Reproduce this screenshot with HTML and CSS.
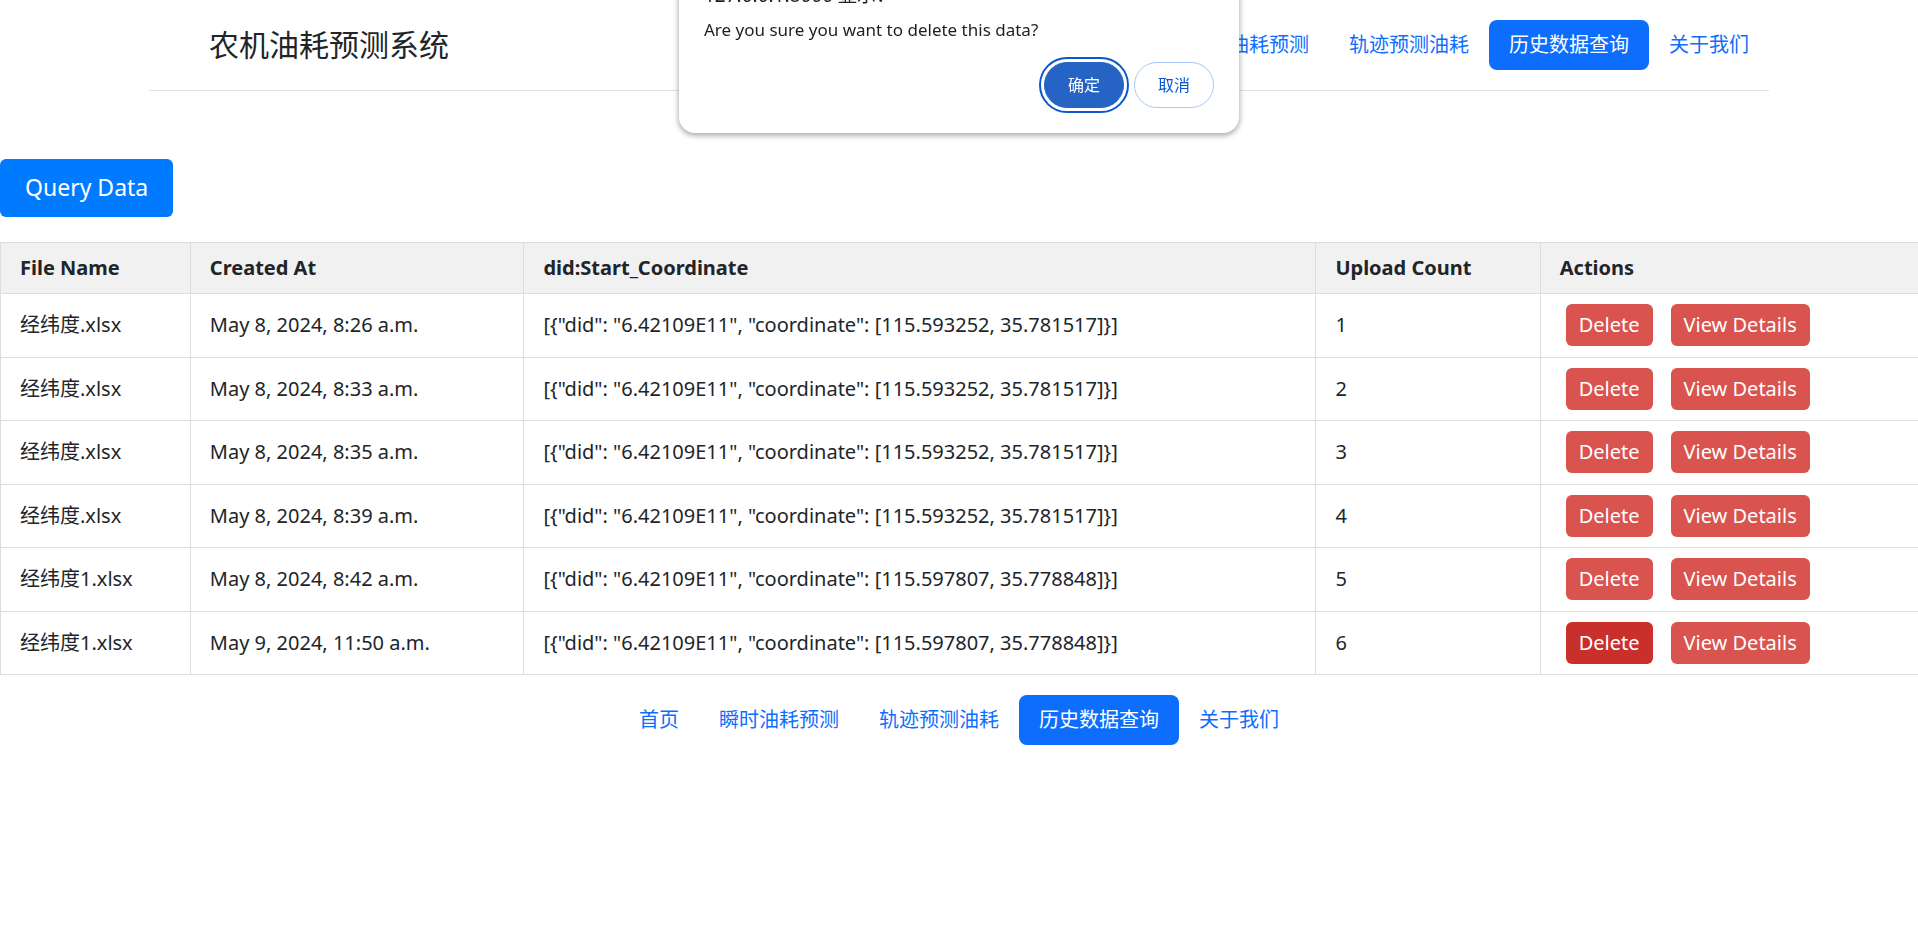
FILE: index.html
```html
<!DOCTYPE html>
<html lang="zh-CN">
<head>
<meta charset="utf-8">
<title>农机油耗预测系统</title>
<meta name="viewport" content="width=device-width, initial-scale=1">
<link rel="stylesheet" href="styles.css">
</head>
<body>
<header class="site-header">
  <h1 class="brand">农机油耗预测系统</h1>
  <nav class="nav" aria-label="主导航">
    <a class="nav-link" href="#home">首页</a>
    <a class="nav-link" href="#instant">瞬时油耗预测</a>
    <a class="nav-link" href="#track">轨迹预测油耗</a>
    <a class="nav-link active" href="#history" aria-current="page">历史数据查询</a>
    <a class="nav-link" href="#about">关于我们</a>
  </nav>
</header>

<main class="content">
  <button class="query-button" type="button">Query Data</button>
  <table class="data-table">
    <colgroup>
      <col class="col-file"><col class="col-created"><col class="col-coordinate"><col class="col-count"><col>
    </colgroup>
    <thead>
      <tr><th>File Name</th><th>Created At</th><th>did:Start_Coordinate</th><th>Upload Count</th><th>Actions</th></tr>
    </thead>
    <tbody>
      <tr><td>经纬度.xlsx</td><td>May 8, 2024, 8:26 a.m.</td><td>[{"did": "6.42109E11", "coordinate": [115.593252, 35.781517]}]</td><td>1</td><td><div class="actions"><button class="action" type="button">Delete</button><button class="action" type="button">View Details</button></div></td></tr>
      <tr><td>经纬度.xlsx</td><td>May 8, 2024, 8:33 a.m.</td><td>[{"did": "6.42109E11", "coordinate": [115.593252, 35.781517]}]</td><td>2</td><td><div class="actions"><button class="action" type="button">Delete</button><button class="action" type="button">View Details</button></div></td></tr>
      <tr><td>经纬度.xlsx</td><td>May 8, 2024, 8:35 a.m.</td><td>[{"did": "6.42109E11", "coordinate": [115.593252, 35.781517]}]</td><td>3</td><td><div class="actions"><button class="action" type="button">Delete</button><button class="action" type="button">View Details</button></div></td></tr>
      <tr><td>经纬度.xlsx</td><td>May 8, 2024, 8:39 a.m.</td><td>[{"did": "6.42109E11", "coordinate": [115.593252, 35.781517]}]</td><td>4</td><td><div class="actions"><button class="action" type="button">Delete</button><button class="action" type="button">View Details</button></div></td></tr>
      <tr><td>经纬度1.xlsx</td><td>May 8, 2024, 8:42 a.m.</td><td>[{"did": "6.42109E11", "coordinate": [115.597807, 35.778848]}]</td><td>5</td><td><div class="actions"><button class="action" type="button">Delete</button><button class="action" type="button">View Details</button></div></td></tr>
      <tr><td>经纬度1.xlsx</td><td>May 9, 2024, 11:50 a.m.</td><td>[{"did": "6.42109E11", "coordinate": [115.597807, 35.778848]}]</td><td>6</td><td><div class="actions"><button class="action pressed" type="button">Delete</button><button class="action" type="button">View Details</button></div></td></tr>
    </tbody>
  </table>
</main>

<footer class="site-footer">
  <nav class="nav" aria-label="页脚导航">
    <a class="nav-link" href="#home">首页</a>
    <a class="nav-link" href="#instant">瞬时油耗预测</a>
    <a class="nav-link" href="#track">轨迹预测油耗</a>
    <a class="nav-link active" href="#history" aria-current="page">历史数据查询</a>
    <a class="nav-link" href="#about">关于我们</a>
  </nav>
</footer>

<dialog class="confirm" open aria-labelledby="confirm-title">
  <h2 class="confirm-title" id="confirm-title">127.0.0.1:8000 显示：</h2>
  <p class="confirm-text">Are you sure you want to delete this data?</p>
  <div class="confirm-buttons">
    <button class="confirm-button primary" type="button">确定</button>
    <button class="confirm-button" type="button">取消</button>
  </div>
</dialog>
</body>
</html>
```
FILE: styles.css
```css
* {
  box-sizing: border-box;
}

body {
  margin: 0;
  background: #fff;
  color: #212529;
  font: 20px/30px "Noto Sans", "Noto Sans CJK SC", sans-serif;
  overflow-x: hidden;
}

button {
  font: inherit;
  cursor: pointer;
}

.site-header {
  display: flex;
  align-items: center;
  justify-content: space-between;
  max-width: 1620px;
  margin: 0 auto 68px;
  padding: 20px 0 20px 60px;
  border-bottom: 1px solid #dee2e6;
}

.brand {
  margin: 0;
  font-size: 30px;
  font-weight: 400;
  line-height: 50px;
}

.nav {
  display: flex;
}

.nav-link {
  padding: 10px 20px;
  border-radius: 8px;
  color: #0d6efd;
  text-decoration: none;
}

.nav-link.active {
  background: #0d6efd;
  color: #fff;
}

.query-button {
  display: block;
  margin-bottom: 25px;
  padding: 13px 25px 15px;
  border: 0;
  border-radius: 6px;
  background: #007bff;
  color: #fff;
  font-size: 23px;
}

.data-table {
  width: 100%;
  border-collapse: collapse;
  table-layout: fixed;
}

.col-file { width: 9.9%; }
.col-created { width: 17.4%; }
.col-coordinate { width: 41.3%; }
.col-count { width: 11.7%; }

.data-table th,
.data-table td {
  padding: 10px 19px;
  border: 1px solid #ddd;
  text-align: left;
  white-space: nowrap;
}

.data-table th {
  background: #f1f1f1;
  font-weight: 700;
}

.data-table th:last-child,
.data-table td:last-child {
  border-right: 0;
}

.data-table td {
  height: 63px;
  padding-top: 9px;
}

.data-table tr:nth-child(odd) td {
  height: 64px;
}

.actions {
  display: flex;
  gap: 18px;
  padding-left: 6px;
}

.action {
  padding: 6px 13px;
  border: 0;
  border-radius: 6px;
  background: #d9534f;
  color: #fff;
}

.action.pressed {
  background: #c9302c;
}

.site-footer {
  display: flex;
  justify-content: center;
  padding-top: 20px;
}

.confirm {
  position: fixed;
  top: -30px;
  width: 560px;
  margin: 0 auto;
  padding: 12px 25px 25px;
  border: 0;
  border-radius: 0 0 16px 16px;
  background: #fff;
  color: #1f1f1f;
  box-shadow: 0 2px 5px 1px rgba(60, 64, 67, 0.4);
}

.confirm-title {
  margin: 0 0 9px;
  font-size: 19px;
  font-weight: 400;
  line-height: 26px;
}

.confirm-text {
  margin: 0 0 19px;
  font-size: 17px;
  line-height: 26px;
}

.confirm-buttons {
  display: flex;
  justify-content: flex-end;
  gap: 10px;
}

.confirm-button {
  width: 80px;
  height: 46px;
  padding: 0;
  border: 1px solid #a8c7fa;
  border-radius: 23px;
  background: #fff;
  color: #0b57d0;
  font-size: 16px;
}

.confirm-button.primary {
  border-color: #2563c4;
  background: #2563c4;
  color: #fff;
  outline: 2px solid #0b57d0;
  outline-offset: 3px;
}
```
